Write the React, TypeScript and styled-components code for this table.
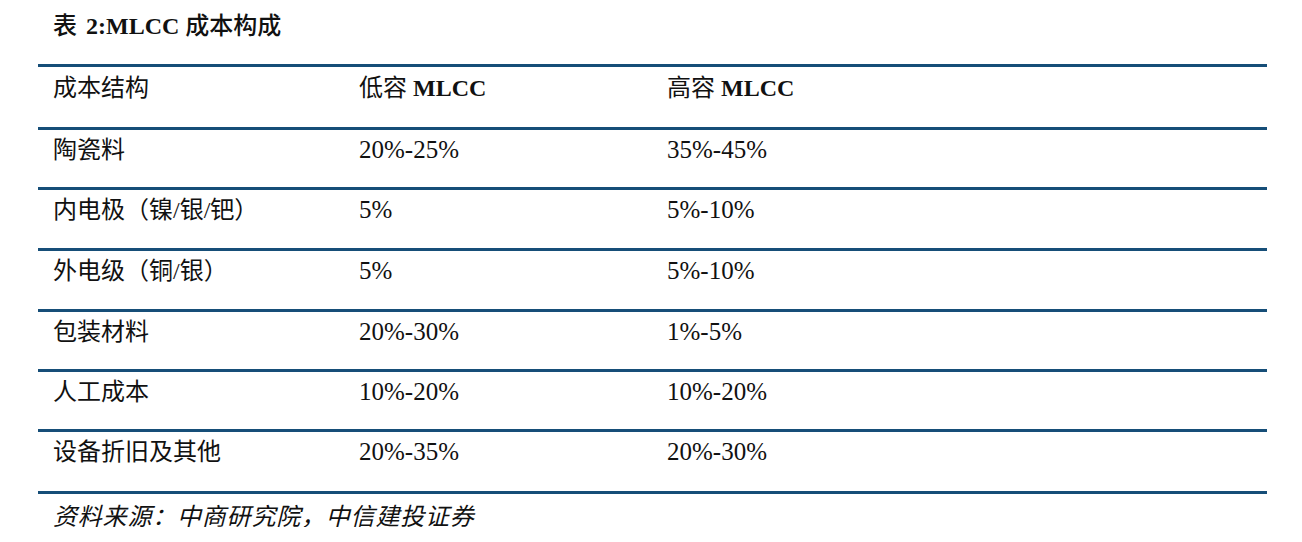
import React from "react";
import styled, { createGlobalStyle } from "styled-components";

const Global = createGlobalStyle`
  html, body { margin: 0; padding: 0; background: #ffffff; }
  body { font-family: "Liberation Serif", "Noto Sans CJK SC", serif; color: #111; }
`;

const LINE = "#164e78";

const Page = styled.div`
  width: 1229px;
  padding-left: 38px;
`;

const Title = styled.div`
  height: 64px;
  box-sizing: border-box;
  padding: 14px 0 0 15px;
  font-size: 24px;
  line-height: 24px;
  font-weight: 500;
`;

const Bold = styled.span<{ $gap?: number }>`
  font-weight: bold;
  font-family: "Liberation Serif", serif;
  margin-left: ${(p) => p.$gap ?? 0}px;
`;

const Row = styled.div<{ $h: number; $pt: number }>`
  display: grid;
  grid-template-columns: 306px 308px 1fr;
  height: ${(p) => p.$h}px;
  box-sizing: border-box;
  border-top: 3px solid ${LINE};
  padding-top: ${(p) => p.$pt}px;
`;

const Cell = styled.div<{ $num?: boolean }>`
  padding-left: 15px;
  font-size: ${(p) => (p.$num ? 25 : 24)}px;
  line-height: 24px;
  white-space: nowrap;
`;

const Footer = styled.div`
  border-top: 3px solid ${LINE};
  padding: 9px 0 0 15px;
  font-size: 24px;
  line-height: 24px;
  letter-spacing: 0.8px;
  font-style: italic;
  font-family: "Noto Sans CJK SC", sans-serif;
`;

const rows: [string, string, string, number][] = [
  ["陶瓷料", "20%-25%", "35%-45%", 60],
  ["内电极（镍/银/钯）", "5%", "5%-10%", 61],
  ["外电级（铜/银）", "5%", "5%-10%", 61],
  ["包装材料", "20%-30%", "1%-5%", 60],
  ["人工成本", "10%-20%", "10%-20%", 60],
  ["设备折旧及其他", "20%-35%", "20%-30%", 62],
];

export default function App() {
  return (
    <>
      <Global />
      <Page>
        <Title>
          表<Bold $gap={9}>2:MLCC</Bold> 成本构成
        </Title>
        <Row $h={63} $pt={9}>
          <Cell>成本结构</Cell>
          <Cell>
            低容 <Bold>MLCC</Bold>
          </Cell>
          <Cell>
            高容 <Bold>MLCC</Bold>
          </Cell>
        </Row>
        {rows.map(([a, b, c, h]) => (
          <Row key={a} $h={h} $pt={8}>
            <Cell>{a}</Cell>
            <Cell $num>{b}</Cell>
            <Cell $num>{c}</Cell>
          </Row>
        ))}
        <Footer>资料来源：中商研究院，中信建投证券</Footer>
      </Page>
    </>
  );
}
